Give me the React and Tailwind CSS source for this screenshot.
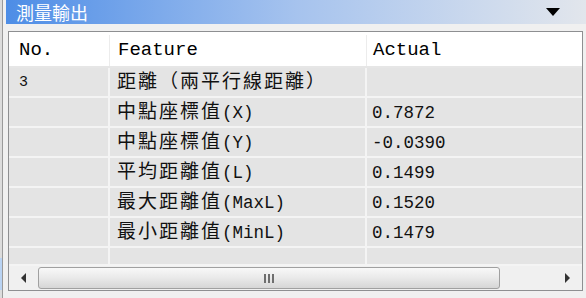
import React from "react";

const rows = [
  { no: "3", feature: "距離（兩平行線距離）", actual: "" },
  { no: "", feature: "中點座標值(X)", actual: "0.7872" },
  { no: "", feature: "中點座標值(Y)", actual: "-0.0390" },
  { no: "", feature: "平均距離值(L)", actual: "0.1499" },
  { no: "", feature: "最大距離值(MaxL)", actual: "0.1520" },
  { no: "", feature: "最小距離值(MinL)", actual: "0.1479" },
];

const font = { fontFamily: '"Liberation Mono", "Noto Sans CJK TC", monospace' };

// wide glyphs get their own span so they take a full double cell
const Mixed = ({ text }) => {
  const parts = text.match(/[\u3000-\u9fff\uff00-\uffef]+|[^\u3000-\u9fff\uff00-\uffef]+/g) || [];
  return parts.map((p, i) =>
    /[\u3000-\u9fff\uff00-\uffef]/.test(p) ? (
      <span key={i} className="text-[19px] tracking-[2px]">{p}</span>
    ) : (
      <span key={i} className="whitespace-pre">{p}</span>
    )
  );
};

const App = () => {
  return (
    <div className="flex w-[586px] h-[298px] bg-[#f0f0f0] overflow-hidden">
      {/* left edge of neighbouring pane */}
      <div className="flex w-[6px] h-full shrink-0">
        <div className="w-[2px] h-full bg-[#dcdcdc] flex flex-col">
          <div className="h-[258px]" />
          <div className="h-[32px] bg-[#b9d3f3]" />
        </div>
        <div className="w-px h-full bg-[#9a9a9a]" />
        <div className="w-[3px] h-full bg-[#f0f0f0]" />
      </div>

      <div className="flex flex-col flex-1">
        {/* title bar */}
        <div className="flex items-center justify-between h-[24px] shrink-0 bg-gradient-to-r from-[#4d8de6] via-[#a6c3ee] to-[#e2e6ec] pl-[10px] pr-[26px]">
          <span
            className="text-white text-[18px] leading-none"
            style={{ fontFamily: '"Noto Sans CJK TC", sans-serif' }}
          >
            測量輸出
          </span>
          <span className="w-0 h-0 border-l-[7px] border-r-[7px] border-t-[8px] border-l-transparent border-r-transparent border-t-black" />
        </div>

        {/* table box */}
        <div className="ml-[2px] mr-[3px] mt-[7px] h-[260px] shrink-0 border border-[#8e8f91] bg-[#e4e4e4] flex flex-col" style={font}>
          <div className="flex h-[36px] shrink-0 pt-[3px] bg-white border-b-2 border-[#e6e6e6] text-[19px] text-black">
            <div className="w-[101px] pl-[10px] flex items-center border-r border-[#ececec]">No.</div>
            <div className="w-[257px] pl-[8px] flex items-center border-r border-[#ececec]">Feature</div>
            <div className="flex-1 pl-[6px] flex items-center">Actual</div>
          </div>
          {rows.map((r, i) => (
            <div key={i} className="flex h-[30px] shrink-0 border-b-2 border-[#f4f4f4] text-[17.5px] text-[#111]">
              <div className="w-[101px] pl-[10px] pt-[3px] flex items-center border-r-2 border-[#f4f4f4] text-[15px]">{r.no}</div>
              <div className="w-[257px] pl-[7px] pt-[3px] flex items-center border-r-2 border-[#f4f4f4] whitespace-nowrap">
                <Mixed text={r.feature} />
              </div>
              <div className="flex-1 pl-[5px] pt-[3px] flex items-center text-[17.5px]">{r.actual}</div>
            </div>
          ))}
          <div className="flex h-[18px] shrink-0 border-b-2 border-[#f4f4f4]">
            <div className="w-[101px] border-r-2 border-[#f4f4f4]" />
            <div className="w-[257px] border-r-2 border-[#f4f4f4]" />
            <div className="flex-1" />
          </div>

          {/* horizontal scrollbar */}
          <div className="flex items-center h-[24px] shrink-0 bg-[#f0f0f0] mt-auto">
            <div className="w-[29px] h-full flex items-center justify-center">
              <span className="w-0 h-0 border-t-[5px] border-b-[5px] border-r-[5px] border-t-transparent border-b-transparent border-r-[#333]" />
            </div>
            <div className="w-[462px] h-[22px] rounded-[3px] border border-[#a0a0a0] bg-gradient-to-b from-[#f8f8f8] via-[#e9e9e9] to-[#d6d6d6] flex items-center justify-center gap-[2px]">
              <span className="w-[2px] h-[9px] bg-[#6e6e6e]" />
              <span className="w-[2px] h-[9px] bg-[#6e6e6e]" />
              <span className="w-[2px] h-[9px] bg-[#6e6e6e]" />
            </div>
            <div className="flex-1 h-full flex items-center justify-end pr-[12px]">
              <span className="w-0 h-0 border-t-[5px] border-b-[5px] border-l-[5px] border-t-transparent border-b-transparent border-l-[#333]" />
            </div>
          </div>
        </div>
      </div>
    </div>
  );
};

export default App;
